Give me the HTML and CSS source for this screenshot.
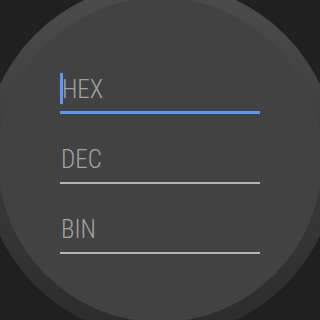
FILE: index.html
```html
<!DOCTYPE html>
<html>
<head>
<meta charset="utf-8">
<link rel="stylesheet" href="styles.css">
</head>
<body>
<div class="screen">
  <div class="bezel">
    <div class="face">
      <form class="form">
        <div class="field focused"><span class="caret"></span><span class="hint">HEX</span></div>
        <div class="field"><span class="hint">DEC</span></div>
        <div class="field"><span class="hint">BIN</span></div>
      </form>
    </div>
  </div>
</div>
</body>
</html>
```
FILE: styles.css
```css
html, body {
  margin: 0;
  padding: 0;
  background: #202020;
}
.screen {
  width: 320px;
  height: 320px;
  overflow: hidden;
  display: flex;
  align-items: center;
  justify-content: center;
  background: #202020;
}
.bezel {
  flex: 0 0 auto;
  width: 354px;
  height: 354px;
  border-radius: 50%;
  background: linear-gradient(to bottom, #4c4c4c 0%, #3c3c3c 50%, #2b2b2b 100%);
  display: flex;
  align-items: center;
  justify-content: center;
}
.face {
  flex: 0 0 auto;
  width: 324px;
  height: 324px;
  border-radius: 50%;
  background: #424242;
  display: flex;
  align-items: center;
  justify-content: center;
}
.form {
  width: 200px;
  margin: 6px 0 0 0;
  display: flex;
  flex-direction: column;
  gap: 29px;
}
.field {
  display: flex;
  align-items: center;
  height: 31px;
  padding-bottom: 8px;
  border-bottom: 2px solid #b4b4b4;
  font-family: "Roboto Condensed", "Liberation Sans Narrow", "DejaVu Sans Condensed", sans-serif;
  font-weight: 300;
  font-size: 25px;
  color: #a2a2a2;
}
.field.focused {
  border-bottom: 3px solid #5a9af6;
  padding-bottom: 7px;
}
.caret {
  width: 3px;
  height: 31px;
  background: #5a9af6;
}
.hint {
  line-height: 31px;
  padding-top: 2px;
  margin-left: 1px;
}
.focused .hint {
  margin-left: -1px;
}
```
